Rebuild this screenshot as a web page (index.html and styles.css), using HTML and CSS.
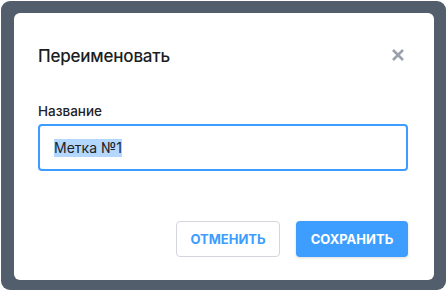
FILE: index.html
```html
<!DOCTYPE html>
<html>
<head>
    <meta charset="utf-8">
    <link rel="stylesheet" href="styles.css">
</head>
<body>
    <div class="overlay">
        <div class="dialog">
            <div class="dialog-head">
                <h2>Переименовать</h2>
                <button type="button" class="close-btn">
                    <svg width="12" height="12" viewBox="0 0 12 12"><path d="M1 1L11 11M11 1L1 11" stroke="#9aa1ab" stroke-width="2.6"/></svg>
                </button>
            </div>
            <form class="dialog-body">
                <label for="name">Название</label>
                <div class="field"><span class="selected">Метка №1</span></div>
            </form>
            <div class="button-container">
                <button type="button" class="btn btn-ghost">Отменить</button>
                <button type="button" class="btn btn-primary">Сохранить</button>
            </div>
        </div>
    </div>
</body>
</html>
```

FILE: styles.css
```css
body {
    margin: 0;
    font-family: Inter, "Noto Sans", sans-serif;
    background-color: #fff;
}

.overlay {
    width: 445px;
    height: 289px;
    margin: 1px 0 0 1px;
    padding: 12px 12px 0 13px;
    box-sizing: border-box;
    background: #535e6d;
    border-radius: 9px;
}

.dialog {
    height: 267px;
    background: #fff;
    border-radius: 6px;
    padding: 0 26px 0 24px;
    box-sizing: border-box;
}

.dialog-head {
    display: flex;
    justify-content: space-between;
    align-items: flex-start;
    padding-top: 33px;
}

.dialog-head h2 {
    margin: 0;
    font-size: 17px;
    font-weight: 500;
    color: #1b1d21;
    letter-spacing: -0.2px;
}

.close-btn {
    background: none;
    border: none;
    padding: 0;
    margin: 3px 4px 0 0;
    cursor: pointer;
    line-height: 0;
}

.dialog-body {
    margin-top: 37px;
}

label {
    display: block;
    font-size: 13.5px;
    font-weight: 500;
    color: #1f2126;
    margin-bottom: 5px;
}

.field {
    height: 47px;
    border: 2px solid #3d9cff;
    border-radius: 4px;
    box-sizing: border-box;
    display: flex;
    align-items: center;
    padding-left: 14px;
    font-size: 14px;
    color: #222;
}

.selected {
    background: #b4d7fd;
    line-height: 18px;
}

.button-container {
    display: flex;
    justify-content: flex-end;
    gap: 16px;
    margin-top: 50px;
}

.btn {
    height: 36px;
    border-radius: 4px;
    font-family: Inter, "Noto Sans", sans-serif;
    font-size: 13px;
    font-weight: 700;
    text-transform: uppercase;
    cursor: pointer;
}

.btn-ghost {
    width: 104px;
    background: #fff;
    border: 1px solid #d3d7dd;
    color: #3d9cff;
}

.btn-primary {
    width: 112px;
    background: #3d9eff;
    border: none;
    color: #fff;
    box-shadow: 0 1px 3px rgba(0, 0, 0, 0.15);
}
```
